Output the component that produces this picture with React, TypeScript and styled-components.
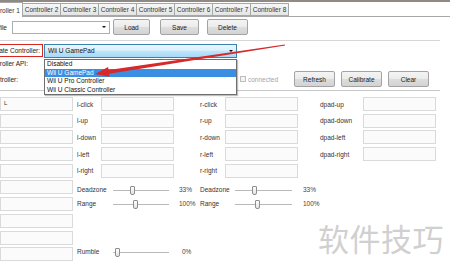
import React from 'react';
import styled, { createGlobalStyle } from 'styled-components';

const GlobalStyle = createGlobalStyle`
html, body {
    margin: 0;
    padding: 0;
    background: #ffffff;
    overflow: hidden;
}
`;

const Window = styled.div`
position: relative;
width: 450px;
height: 271px;
overflow: hidden;
background: #ffffff;
border-top: 2px solid #8f8a85;
box-sizing: border-box;
font-family: "Liberation Sans", Arial, sans-serif;
font-size: 6.5px;
color: #222222;
`;

const TabBar = styled.div`
display: flex;
align-items: flex-end;
height: 14px;
margin-left: -17px;
`;

const Tab = styled.div<{ $active?: boolean }>`
box-sizing: border-box;
width: ${props => (props.$active ? '40px' : '39px')};
height: ${props => (props.$active ? '15px' : '13px')};
margin-bottom: ${props => (props.$active ? '-1px' : '0')};
border: 1px solid #a7a7a7;
border-bottom: ${props => (props.$active ? 'none' : '1px solid #a7a7a7')};
background: ${props => (props.$active ? '#ffffff' : 'linear-gradient(#f7f7f7, #e4e4e4)')};
color: #333333;
display: flex;
align-items: center;
justify-content: center;
white-space: nowrap;
margin-right: -1px;
position: relative;
z-index: ${props => (props.$active ? 2 : 1)};
`;

const Pane = styled.div`
border-top: 1px solid #a7a7a7;
`;

const Row = styled.div<{ $h: number; $top?: number }>`
display: flex;
align-items: center;
height: ${props => props.$h}px;
margin-top: ${props => props.$top || 0}px;
`;

// labels whose start is cut by the left edge of the window
const CutLabel = styled.div<{ $w: number }>`
width: ${props => props.$w}px;
flex-shrink: 0;
display: flex;
justify-content: flex-end;
white-space: nowrap;
`;

const MarkedLabel = styled(CutLabel)`
box-sizing: border-box;
height: 13px;
align-items: center;
padding-right: 2px;
border: 1px solid #d8271f;
border-left: none;
`;

const Combo = styled.div<{ $w: number; $left: number; $focus?: boolean }>`
box-sizing: border-box;
position: relative;
width: ${props => props.$w}px;
height: ${props => (props.$focus ? 14 : 13)}px;
margin-left: ${props => props.$left}px;
border: 1px solid ${props => (props.$focus ? '#3c7fb1' : '#abadb3')};
background: ${props =>
    props.$focus
        ? 'linear-gradient(#eaf6fd 0%, #d9f0fc 45%, #bee6fd 50%, #a7d9f5 100%)'
        : '#ffffff'};
display: flex;
align-items: center;
padding-left: 3px;
color: #111111;

&:after {
    content: '';
    position: absolute;
    right: 3px;
    top: 50%;
    margin-top: -1px;
    border-left: 2px solid transparent;
    border-right: 2px solid transparent;
    border-top: 2.5px solid #111111;
}
`;

const Button = styled.div<{ $w: number; $left: number }>`
box-sizing: border-box;
width: ${props => props.$w}px;
height: 16px;
margin-left: ${props => props.$left}px;
border: 1px solid #a3a3a3;
border-radius: 2px;
background: linear-gradient(#f4f4f4 0%, #ebebeb 50%, #dddddd 51%, #d3d3d3 100%);
display: flex;
align-items: center;
justify-content: center;
color: #222222;
flex-shrink: 0;
`;

const Group = styled.div`
margin-top: 5px;
margin-right: 10px;
border-top: 1px solid #d6d6d6;
`;

const Check = styled.div<{ $left: number }>`
display: flex;
align-items: center;
margin-left: ${props => props.$left}px;
width: 53px;
color: #a5a5a5;
gap: 2px;
`;

const CheckBox = styled.div`
box-sizing: border-box;
width: 6px;
height: 6px;
border: 1px solid #bdbdbd;
background: #f4f4f4;
`;

const Mapping = styled.div`
display: flex;
margin-top: 3px;
padding-top: 6px;
border-top: 1px solid #c9c9c9;
margin-right: 10px;
`;

const BoxColumn = styled.div`
display: flex;
flex-direction: column;
gap: 2.7px;
width: 73px;
`;

const TextBox = styled.div`
box-sizing: border-box;
width: 73px;
height: 14px;
border: 1px solid #dadada;
background: #fbfbfb;
padding: 2px 0 0 3px;
font-size: 6px;
color: #333333;
`;

const RightArea = styled.div`
display: flex;
flex-direction: column;
padding-left: 4px;
`;

const ButtonGrid = styled.div`
display: grid;
grid-template-columns: 24px 73px 51px 73px 65px 73px;
grid-template-rows: repeat(5, 14px);
row-gap: 2.7px;
`;

const MapLabel = styled.div<{ $pad?: number }>`
display: flex;
align-items: center;
padding-left: ${props => props.$pad || 0}px;
white-space: nowrap;
color: #333333;
`;

const SliderRow = styled.div<{ $top: number }>`
display: grid;
grid-template-columns: 36px 56px 31px 35px 57px 40px;
height: 14px;
margin-top: ${props => props.$top}px;
align-items: center;
`;

const SliderTrack = styled.div`
position: relative;
height: 14px;

&:before {
    content: '';
    position: absolute;
    left: 0;
    right: 0;
    top: 7px;
    height: 1px;
    background: #b9b9b9;
}
`;

const Thumb = styled.div`
position: absolute;
top: 3px;
box-sizing: border-box;
width: 5px;
height: 9px;
margin-left: -2.5px;
border: 1px solid #8d8d8d;
border-radius: 1px 1px 2px 2px;
background: linear-gradient(#fdfdfd, #e4e4e4);
`;

const Percent = styled.div<{ $pad: number }>`
padding-left: ${props => props.$pad}px;
color: #444444;
white-space: nowrap;
`;

const DropList = styled.div`
position: absolute;
left: 44px;
top: 57px;
width: 193px;
box-sizing: border-box;
border: 1px solid #6e6e6e;
background: #ffffff;
box-shadow: 1px 1px 1px rgba(0, 0, 0, 0.25);
z-index: 5;
`;

const DropItem = styled.div<{ $selected?: boolean }>`
height: 8.5px;
line-height: 8.5px;
padding-left: 2px;
background: ${props => (props.$selected ? '#3a8fe3' : 'transparent')};
color: ${props => (props.$selected ? '#ffffff' : '#111111')};
white-space: nowrap;
`;

const Watermark = styled.div`
position: absolute;
right: 6px;
top: 213px;
font-family: "Noto Sans CJK SC", sans-serif;
font-size: 31px;
letter-spacing: 0.5px;
color: #d0d0d0;
`;

const Annotation = styled.svg`
position: absolute;
left: 0;
top: 0;
z-index: 6;
pointer-events: none;
`;

const tabs = ['Controller 1', 'Controller 2', 'Controller 3', 'Controller 4', 'Controller 5', 'Controller 6', 'Controller 7', 'Controller 8'];
const controllers = ['Disabled', 'Wii U GamePad', 'Wii U Pro Controller', 'Wii U Classic Controller'];

const rows = [
    ['l-click', 'r-click', 'dpad-up'],
    ['l-up', 'r-up', 'dpad-down'],
    ['l-down', 'r-down', 'dpad-left'],
    ['l-left', 'r-left', 'dpad-right'],
    ['l-right', 'r-right', ''],
];

const Slider = ({ pos }: { pos: number }) => (
    <SliderTrack>
        <Thumb style={{ left: pos }} />
    </SliderTrack>
);

export default function App(): JSX.Element {
    return (
        <Window>
            <GlobalStyle />
            <TabBar>
                {tabs.map((t, i) => (
                    <Tab key={t} $active={i == 0}>{t}</Tab>
                ))}
            </TabBar>
            <Pane>
                <Row $h={16} $top={2}>
                    <CutLabel $w={7}>Profile</CutLabel>
                    <Combo $w={98} $left={5} />
                    <Button $w={37} $left={3}>Load</Button>
                    <Button $w={39} $left={10}>Save</Button>
                    <Button $w={41} $left={8}>Delete</Button>
                </Row>
                <Group>
                    <Row $h={15} $top={2}>
                        <MarkedLabel $w={43}>Emulate Controller:</MarkedLabel>
                        <Combo $w={193} $left={1} $focus>Wii U GamePad</Combo>
                    </Row>
                    <Row $h={10} $top={0}>
                        <CutLabel $w={28}>Controller API:</CutLabel>
                    </Row>
                    <Row $h={16} $top={3}>
                        <CutLabel $w={18}>Controller:</CutLabel>
                        <Check $left={222}>
                            <CheckBox />
                            connected
                        </Check>
                        <Button $w={41} $left={1}>Refresh</Button>
                        <Button $w={41} $left={6}>Calibrate</Button>
                        <Button $w={41} $left={6}>Clear</Button>
                    </Row>
                </Group>
                <Mapping>
                    <BoxColumn>
                        {Array.from({ length: 10 }).map((_, i) => (
                            <TextBox key={i}>{i == 0 ? 'L' : ''}</TextBox>
                        ))}
                    </BoxColumn>
                    <RightArea>
                        <ButtonGrid>
                            {rows.map(r => (
                                <React.Fragment key={r[0]}>
                                    <MapLabel>{r[0]}</MapLabel>
                                    <TextBox />
                                    <MapLabel $pad={26}>{r[1]}</MapLabel>
                                    <TextBox />
                                    <MapLabel $pad={22}>{r[2]}</MapLabel>
                                    {r[2] ? <TextBox /> : <div />}
                                </React.Fragment>
                            ))}
                        </ButtonGrid>
                        <SliderRow $top={5}>
                            <MapLabel>Deadzone</MapLabel>
                            <Slider pos={19.5} />
                            <Percent $pad={10}>33%</Percent>
                            <MapLabel>Deadzone</MapLabel>
                            <Slider pos={19.5} />
                            <Percent $pad={11}>33%</Percent>
                        </SliderRow>
                        <SliderRow $top={0}>
                            <MapLabel>Range</MapLabel>
                            <Slider pos={22} />
                            <Percent $pad={10}>100%</Percent>
                            <MapLabel>Range</MapLabel>
                            <Slider pos={22} />
                            <Percent $pad={11}>100%</Percent>
                        </SliderRow>
                        <SliderRow $top={34}>
                            <MapLabel>Rumble</MapLabel>
                            <Slider pos={4} />
                            <Percent $pad={13}>0%</Percent>
                        </SliderRow>
                    </RightArea>
                </Mapping>
            </Pane>
            <DropList>
                {controllers.map((c, i) => (
                    <DropItem key={c} $selected={i == 1}>{c}</DropItem>
                ))}
            </DropList>
            <Watermark>软件技巧</Watermark>
            <Annotation width={450} height={271} viewBox="0 0 450 271">
                <polygon
                    points="284.9,42.4 285.1,43.6 109.1,71.7 109.6,74.8 95,72 108.1,65 108.6,68.1"
                    fill="#d7282a"
                />
            </Annotation>
        </Window>
    );
}
